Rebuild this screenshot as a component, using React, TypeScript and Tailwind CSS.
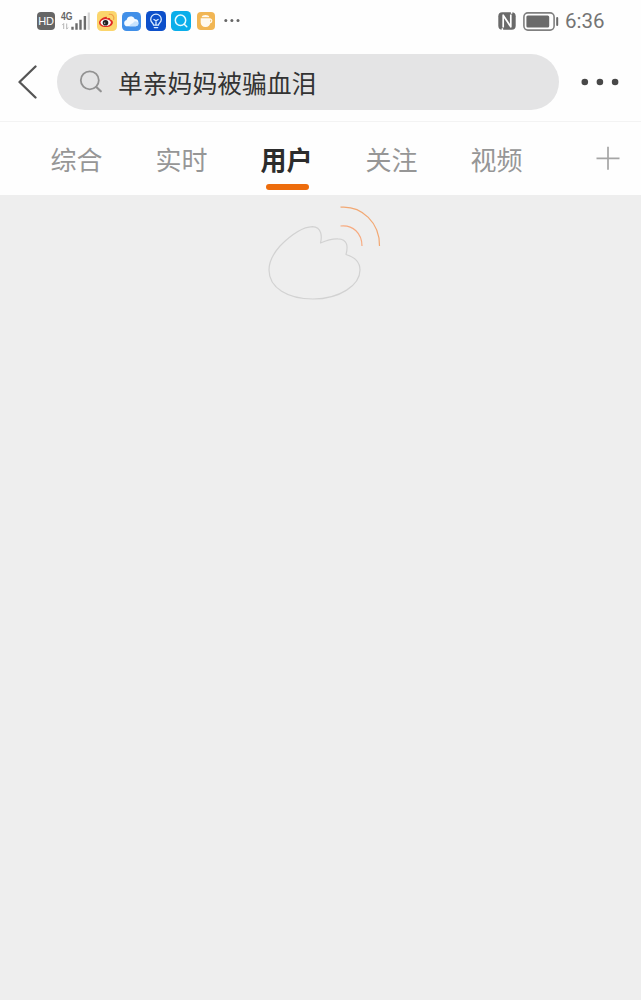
import { useState } from 'react';

const TABS = ['综合', '实时', '用户', '关注', '视频'];

function SignalIcon() {
    return (
        <svg width="30" height="20" viewBox="0 0 30 20" className="ml-[5px] shrink-0">
            <text x="1" y="8.6" fontSize="10" fontWeight="700" fill="#666" textLength="11.5" lengthAdjust="spacingAndGlyphs">4G</text>
            <path d="M3.7 18v-5.5l-1.4 1.6M6.7 12.5V18l1.6-1.4" stroke="#b5b5b5" strokeWidth="1" fill="none" />
            <path d="M12.5 15.8v3M16.5 12.2v6.6M20.5 8.8v10M24.9 5v13.8" stroke="#6c6c6c" strokeWidth="2.4" />
            <path d="M28.8 1.5v17.3" stroke="#d4d4d4" strokeWidth="2.2" />
        </svg>
    );
}

function WeiboAppIcon() {
    return (
        <svg width="20" height="20" viewBox="0 0 20 20" className="ml-[7px] shrink-0">
            <rect width="20" height="20" rx="4.5" fill="#fbd56c" />
            <path d="M8.4 5.9c1.2-.5 1.8.3 1.5 1.5 2-.8 3.7-.5 3.4 1.2 1.4.4 2.6 1.4 2.6 2.8 0 2.7-3.3 4.7-7 4.7-3.9 0-6.9-1.8-6.9-4.6 0-2.2 3-4.9 6.4-5.6z" fill="#df2a25" />
            <ellipse cx="8.7" cy="11.6" rx="5.1" ry="3.4" fill="#fff" />
            <circle cx="8.5" cy="11.8" r="2.8" fill="#222" />
            <circle cx="7.7" cy="12.1" r=".7" fill="#fff" />
            <path d="M12.2 3.3c3.3-.4 5.3 2 4.5 5" stroke="#f0a04a" strokeWidth="1.2" fill="none" strokeLinecap="round" />
        </svg>
    );
}

function CloudAppIcon() {
    return (
        <svg width="19" height="19" viewBox="0 0 19 19" className="ml-[5px] shrink-0">
            <rect width="19" height="19" rx="4.5" fill="#408fe8" />
            <path d="M5.2 14.3a3.2 3.2 0 0 1-.6-6.3A4.3 4.3 0 0 1 12.8 7a3.7 3.7 0 0 1 .8 7.3z" fill="#f4faff" />
            <path d="M7.5 14.3c.2-2.5 3.5-2.5 4.5-4.5 1-1.3 4.4-.7 4.4 2 0 1.5-1 2.5-2.5 2.5z" fill="#c6e2fd" />
        </svg>
    );
}

function BulbAppIcon() {
    return (
        <svg width="20" height="20" viewBox="0 0 20 20" className="ml-[5px] shrink-0">
            <rect width="20" height="20" rx="4.5" fill="#0c4fca" />
            <path d="M7.6 14.2c0-1.8-2.9-2.9-2.9-5.8a5.3 5.3 0 0 1 10.6 0c0 2.9-2.9 4-2.9 5.8z" stroke="#d9ebff" strokeWidth="1.3" fill="none" />
            <path d="M8.3 16.6h3.4M7.9 8.5l2.1 1.3 2.1-1.3M10 9.8v4" stroke="#d9ebff" strokeWidth="1.3" fill="none" strokeLinecap="round" />
        </svg>
    );
}

function SearchAppIcon() {
    return (
        <svg width="20" height="20" viewBox="0 0 20 20" className="ml-[5px] shrink-0">
            <rect width="20" height="20" rx="4.5" fill="#0aaeea" />
            <circle cx="9.5" cy="9.3" r="5.2" stroke="#e9faff" strokeWidth="1.5" fill="none" />
            <path d="M13.2 13.2l2.6 2.5" stroke="#e9faff" strokeWidth="1.5" strokeLinecap="round" />
        </svg>
    );
}

function CupAppIcon() {
    return (
        <svg width="18" height="18" viewBox="0 0 18 18" className="ml-[6px] shrink-0">
            <rect width="18" height="18" rx="4" fill="#f1b654" />
            <path d="M3.7 6.2h9.6v4.4a4.5 4.5 0 0 1-4.5 4.5h-.6a4.5 4.5 0 0 1-4.5-4.5z" fill="#fffaf0" />
            <path d="M4.7 5.2c0-3 7.6-3 7.6 0z" fill="#fffaf0" />
            <path d="M13 7.2c2.5-.3 2.3 3.5-.3 3.8" stroke="#fffaf0" strokeWidth="1.2" fill="none" />
        </svg>
    );
}

function NfcIcon() {
    return (
        <svg width="18" height="18" viewBox="0 0 18 18" className="shrink-0">
            <rect x=".3" y=".3" width="17.4" height="17.4" rx="4" fill="#6a6a6a" />
            <path d="M5.2 15.5V3.2l7.6 11.6V2.5" stroke="#fff" strokeWidth="1.7" fill="none" strokeLinejoin="round" />
            <path d="M4.4 16.2v1.8M13.6 0v1.8" stroke="#fff" strokeWidth="1.5" />
        </svg>
    );
}

function BatteryIcon() {
    return (
        <svg width="36" height="19" viewBox="0 0 36 19" className="ml-[7px] shrink-0">
            <rect x=".9" y=".9" width="30.2" height="17.2" rx="4" stroke="#808080" strokeWidth="1.6" fill="none" />
            <rect x="3.4" y="3.4" width="22.8" height="12.2" rx="1.5" fill="#6a6a6a" />
            <path d="M34.2 6v7" stroke="#6a6a6a" strokeWidth="2" strokeLinecap="round" />
        </svg>
    );
}

function StatusBar() {
    return (
        <div className="flex h-[42px] items-center pl-[37px] pr-[37px]">
            <div className="flex size-[18px] shrink-0 items-center justify-center rounded bg-[#666] text-[11px] tracking-[-0.3px] text-white">
                HD
            </div>
            <SignalIcon />
            <WeiboAppIcon />
            <CloudAppIcon />
            <BulbAppIcon />
            <SearchAppIcon />
            <CupAppIcon />
            <svg width="16" height="4" viewBox="0 0 16 4" className="ml-[9px] shrink-0" fill="#666">
                <circle cx="1.8" cy="1.6" r="1.5" />
                <circle cx="7.9" cy="1.6" r="1.5" />
                <circle cx="14" cy="1.6" r="1.5" />
            </svg>
            <div className="ml-auto flex items-center">
                <NfcIcon />
                <BatteryIcon />
                <span className="ml-[6px] w-[39px] whitespace-nowrap pt-px font-['Roboto',sans-serif] text-[20.5px] leading-none text-[#747474]">6:36</span>
            </div>
        </div>
    );
}

function SearchHeader() {
    return (
        <div className="flex h-[80px] items-center border-b border-[#f3f3f3] pt-px pl-[18px] pr-[21px]">
            <button aria-label="返回" className="shrink-0">
                <svg width="20" height="34" viewBox="0 0 20 34" fill="none" stroke="#555" strokeWidth="2.3" strokeLinecap="round" strokeLinejoin="round">
                    <path d="M17.5 1.5L1.5 17l16 15.5" />
                </svg>
            </button>
            <div className="ml-[19px] flex h-[56px] w-[502px] items-center rounded-full bg-[#e4e4e5] pl-[22px]">
                <svg width="24" height="24" viewBox="0 0 24 24" fill="none" stroke="#929292" className="shrink-0">
                    <circle cx="10.8" cy="10.3" r="9" strokeWidth="1.8" />
                    <path d="M17.3 17l4.5 4.3" strokeWidth="2.2" strokeLinecap="round" />
                </svg>
                <span className="ml-[15px] pt-[6px] text-[24.8px] leading-none text-[#333]">单亲妈妈被骗血泪</span>
            </div>
            <button aria-label="更多" className="ml-auto">
                <svg width="40" height="8" viewBox="0 0 40 8" fill="#484848">
                    <circle cx="4.8" cy="4" r="3.3" />
                    <circle cx="19.9" cy="4" r="3.3" />
                    <circle cx="35.1" cy="4" r="3.3" />
                </svg>
            </button>
        </div>
    );
}

export default function App() {
    const [active, setActive] = useState('用户');

    return (
        <div className="flex h-[1000px] w-full flex-col overflow-hidden bg-[#eeeeee] font-['Liberation_Sans','Noto_Sans_CJK_SC',sans-serif]">
            <header className="shrink-0 bg-[#fefefe]">
                <StatusBar />
                <SearchHeader />
                <nav className="flex h-[73px] pl-[24px]">
                    {TABS.map((tab) => (
                        <button
                            key={tab}
                            onClick={() => setActive(tab)}
                            className="flex w-[105px] shrink-0 flex-col items-center pt-[20px]"
                        >
                            <span className={`text-[26px] leading-[38px] ${tab === active ? 'font-bold text-[#2c2c2c]' : 'text-[#969696]'}`}>
                                {tab}
                            </span>
                            {tab === active && <span className="ml-[2px] mt-[3.5px] h-[6px] w-[43px] rounded-full bg-[#ed6c0c]" />}
                        </button>
                    ))}
                    <button aria-label="添加" className="ml-auto mr-[20px] self-start pt-[24px]">
                        <svg width="26" height="26" viewBox="0 0 26 26" stroke="#a5a5a5" strokeWidth="1.7">
                            <path d="M1.5 12.3h23M13 .8v23" />
                        </svg>
                    </button>
                </nav>
            </header>

            {/* loading outline of the weibo eye */}
            <main className="flex flex-1 justify-center">
                <svg width="140" height="115" viewBox="0 0 140 115" fill="none" className="mr-[-9px]">
                    <path
                        d="M65.5 48C67 42 67 32 57.5 31.7C47 32 35 41 25 51C17 60 14 68 14 75C14 93 33 104 58 104C85 104 105 90 105 75C105 67 99 62 91 59.5C93 52 93 44 83 43.8C76 43.5 72 45 65.5 48Z"
                        stroke="#d2d2d2"
                        strokeWidth="1.2"
                        strokeLinejoin="round"
                    />
                    <path d="M85.5 31C98 29.5 107 38.5 107 51" stroke="#f7ab80" strokeWidth="1.2" />
                    <path d="M85.5 12.2C107 10.5 125 28 124.5 51" stroke="#f2a873" strokeWidth="1.2" />
                </svg>
            </main>
        </div>
    );
}
